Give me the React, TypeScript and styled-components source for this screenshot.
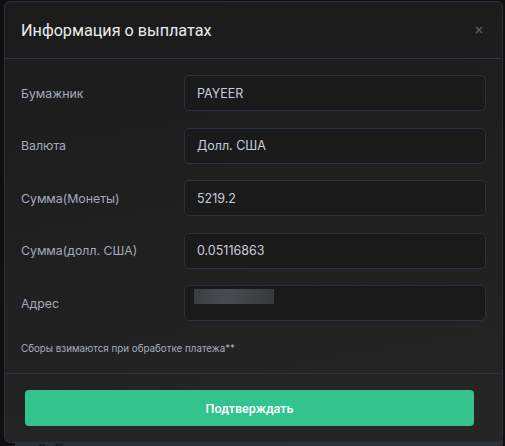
import React from "react"
import styled, { createGlobalStyle } from "styled-components"

const GlobalStyle = createGlobalStyle`
  html, body {
    margin: 0;
    padding: 0;
    background: #0f0f10;
  }
  body {
    font-family: Inter, "Liberation Sans", Arial, sans-serif;
  }
`

const Page = styled.div`
  width: 505px;
  height: 446px;
  overflow: hidden;
  background: #0f0f10;
  padding: 1px 2px 0 4px;
  box-sizing: border-box;
`

const Modal = styled.div`
  width: 499px;
  box-sizing: border-box;
  border: 1px solid #2c3042;
  border-radius: 6px;
  background: linear-gradient(170deg, #1b1b1b 0%, #202020 55%, #262626 100%);
  display: flex;
  flex-direction: column;
  overflow: hidden;
  position: relative;
  z-index: 1;
`

const Header = styled.div`
  height: 57px;
  box-sizing: border-box;
  display: flex;
  align-items: center;
  justify-content: space-between;
  padding: 0 17px 0 16px;
  border-bottom: 1px solid #2d3350;
`

const Title = styled.h2`
  margin: 0;
  font-family: Roboto, "Liberation Sans", Arial, sans-serif;
  font-size: 16.2px;
  font-weight: 400;
  color: #ececec;
`

const CloseButton = styled.button`
  border: none;
  background: none;
  padding: 0;
  width: 12px;
  height: 12px;
  display: flex;
  align-items: center;
  justify-content: center;
  cursor: pointer;
`

const Body = styled.div`
  padding: 16px 16px 0 16px;
  display: flex;
  flex-direction: column;
  gap: 16.5px;
`

const Row = styled.div`
  display: grid;
  grid-template-columns: 163px 1fr;
  align-items: center;
`

const Label = styled.label`
  font-size: 12.3px;
  color: #a6aabd;
`

const Field = styled.div`
  height: 36px;
  box-sizing: border-box;
  border: 1px solid #2b2f44;
  border-radius: 5px;
  background: #1a1a1a;
  display: flex;
  align-items: center;
  padding: 0 12px;
  font-size: 12.5px;
  color: #c9ccd9;
`

const Blurred = styled.div`
  width: 80px;
  height: 15px;
  margin-top: -13px;
  margin-left: -3px;
  background: linear-gradient(90deg, #3a3b40 0%, #45464d 20%, #4a4b52 45%, #42434a 65%, #3c3d43 85%, #38393e 100%);
  filter: blur(0.6px);
`

const Note = styled.p`
  margin: 22px 0 0 0;
  padding: 0 16px;
  font-size: 9.8px;
  line-height: 12px;
  color: #a8abbb;
`

const Footer = styled.div`
  margin-top: 18px;
  border-top: 1px solid #2d3142;
  padding: 16px 28px 16px 20px;
`

const ConfirmButton = styled.button`
  width: 100%;
  height: 36px;
  border: none;
  border-radius: 4px;
  background: #34c38f;
  color: #ffffff;
  font-family: Roboto, "Liberation Sans", Arial, sans-serif;
  font-size: 12.5px;
  font-weight: 500;
  cursor: pointer;
`

const BehindText = styled.div`
  margin: -3px 0 0 11px;
  padding: 0 0 0 22px;
  height: 20px;
  background: #2c2f35;
  font-size: 15px;
  line-height: 20px;
  color: #15171a;
  white-space: nowrap;
`

const rows = [
  { label: "Бумажник", value: "PAYEER" },
  { label: "Валюта", value: "Долл. США" },
  { label: "Сумма(Монеты)", value: "5219.2" },
  { label: "Сумма(долл. США)", value: "0.05116863" },
]

const App = () => {
  return (
    <Page>
      <GlobalStyle />
      <Modal>
        <Header>
          <Title>Информация о выплатах</Title>
          <CloseButton aria-label="close">
            <svg width="8" height="8" viewBox="0 0 8 8">
              <path d="M1 1 L7 7 M7 1 L1 7" stroke="#626262" strokeWidth="1.2" />
            </svg>
          </CloseButton>
        </Header>
        <Body>
          {rows.map((r) => (
            <Row key={r.label}>
              <Label>{r.label}</Label>
              <Field>{r.value}</Field>
            </Row>
          ))}
          <Row>
            <Label>Адрес</Label>
            <Field>
              <Blurred />
            </Field>
          </Row>
        </Body>
        <Note>Сборы взимаются при обработке платежа**</Note>
        <Footer>
          <ConfirmButton>Подтверждать</ConfirmButton>
        </Footer>
      </Modal>
      <BehindText>3. Введите сумму, которую вы хотите вывести.</BehindText>
    </Page>
  )
}

export default App
